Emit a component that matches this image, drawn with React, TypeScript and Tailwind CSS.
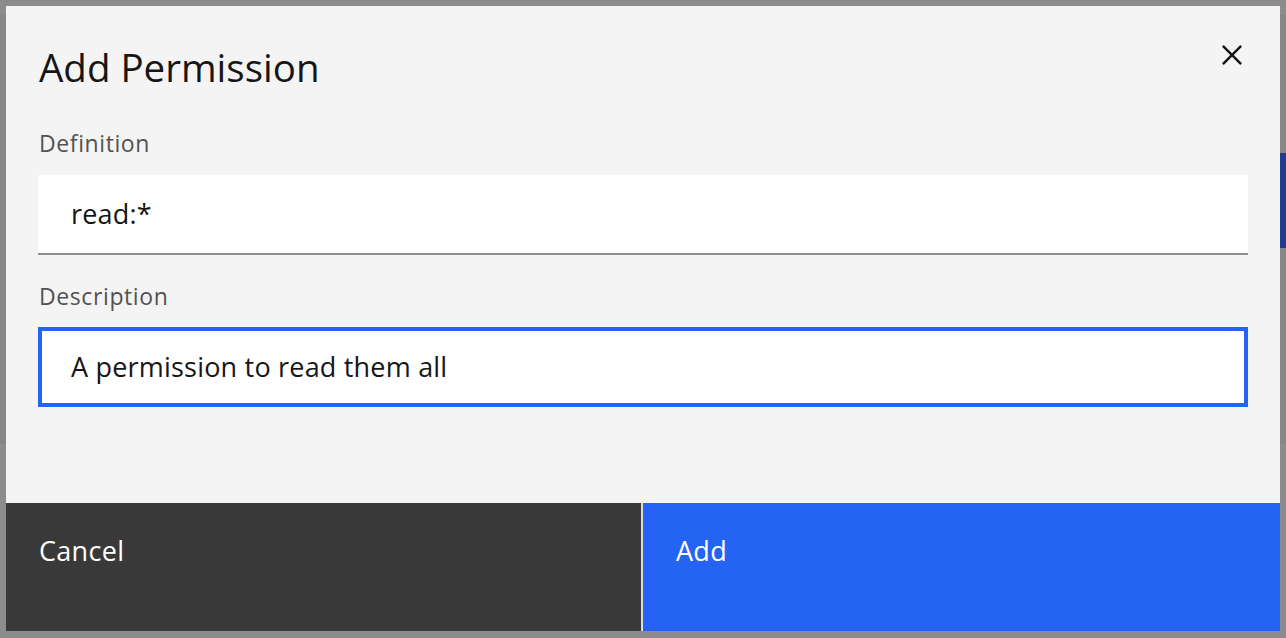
import { useState } from "react"

function CloseIcon() {
  return (
    <svg width="40" height="40" viewBox="0 0 32 32" fill="#161616" aria-hidden="true">
      <polygon points="24 9.4 22.6 8 16 14.6 9.4 8 8 9.4 14.6 16 8 22.6 9.4 24 16 17.4 22.6 24 24 22.6 17.4 16 24 9.4" />
    </svg>
  )
}

function SideStrip({ right }: { right?: boolean }) {
  return (
    <div className="flex w-[6px] shrink-0 flex-col bg-[#8c8c8c]">
      <div className="h-[15px]" />
      <div className="flex h-[429px] flex-col bg-[#868686]">
        {right && (
          <>
            <div className="h-[138px]" />
            <div className="h-[95px] overflow-hidden bg-[#1f3d8c]" />
          </>
        )}
      </div>
    </div>
  )
}

export default function App() {
  const [definition, setDefinition] = useState("read:*")
  const [description, setDescription] = useState("A permission to read them all")

  return (
    <div className="flex h-[638px] w-full overflow-hidden bg-[#8c8c8c] font-['Open_Sans',sans-serif]">
      <SideStrip />
      <div className="flex flex-1 flex-col pt-[6px] pb-[7px]">
        <div className="relative flex flex-1 flex-col bg-[#f4f4f4]">
          <button className="absolute right-[28px] top-[29px] flex h-[40px] w-[40px] items-center justify-center">
            <CloseIcon />
          </button>

          <div className="flex flex-col px-[32px] pt-[37px]">
            <h2 className="pl-[1px] text-[38.5px] leading-[48px] text-[#161616]">Add Permission</h2>

            <label className="mt-[37px] pl-[1px] text-[23px] leading-[30px] tracking-[0.6px] text-[#525252]">
              Definition
            </label>
            <div className="mt-[17px] flex h-[80px] items-center border-b-2 border-[#8d8d8d] bg-white pl-[33px]">
              <input
                value={definition}
                onChange={(e) => setDefinition(e.target.value)}
                className="w-full bg-transparent text-[27px] leading-[36px] tracking-[0.2px] text-[#161616] outline-none"
              />
            </div>

            <label className="mt-[26px] pl-[1px] text-[23px] leading-[30px] tracking-[0.6px] text-[#525252]">
              Description
            </label>
            <div className="mt-[16px] flex h-[80px] items-center border-4 border-[#2563f4] bg-white pl-[29px]">
              <input
                value={description}
                onChange={(e) => setDescription(e.target.value)}
                className="w-full bg-transparent text-[27px] leading-[36px] tracking-[0.2px] text-[#161616] outline-none"
              />
            </div>
          </div>

          <div className="flex-1" />

          <div className="flex h-[128px]">
            <button className="flex w-[635px] items-start bg-[#393939] pl-[33px] pt-[30px] text-left text-[27px] leading-[36px] tracking-[0.3px] text-white">
              Cancel
            </button>
            <div className="w-[2px] bg-[#dcdcdc]" />
            <button className="flex flex-1 items-start bg-[#2563f4] pl-[33px] pt-[30px] text-left text-[27px] leading-[36px] tracking-[0.3px] text-white">
              Add
            </button>
          </div>
        </div>
      </div>
      <SideStrip right />
    </div>
  )
}
